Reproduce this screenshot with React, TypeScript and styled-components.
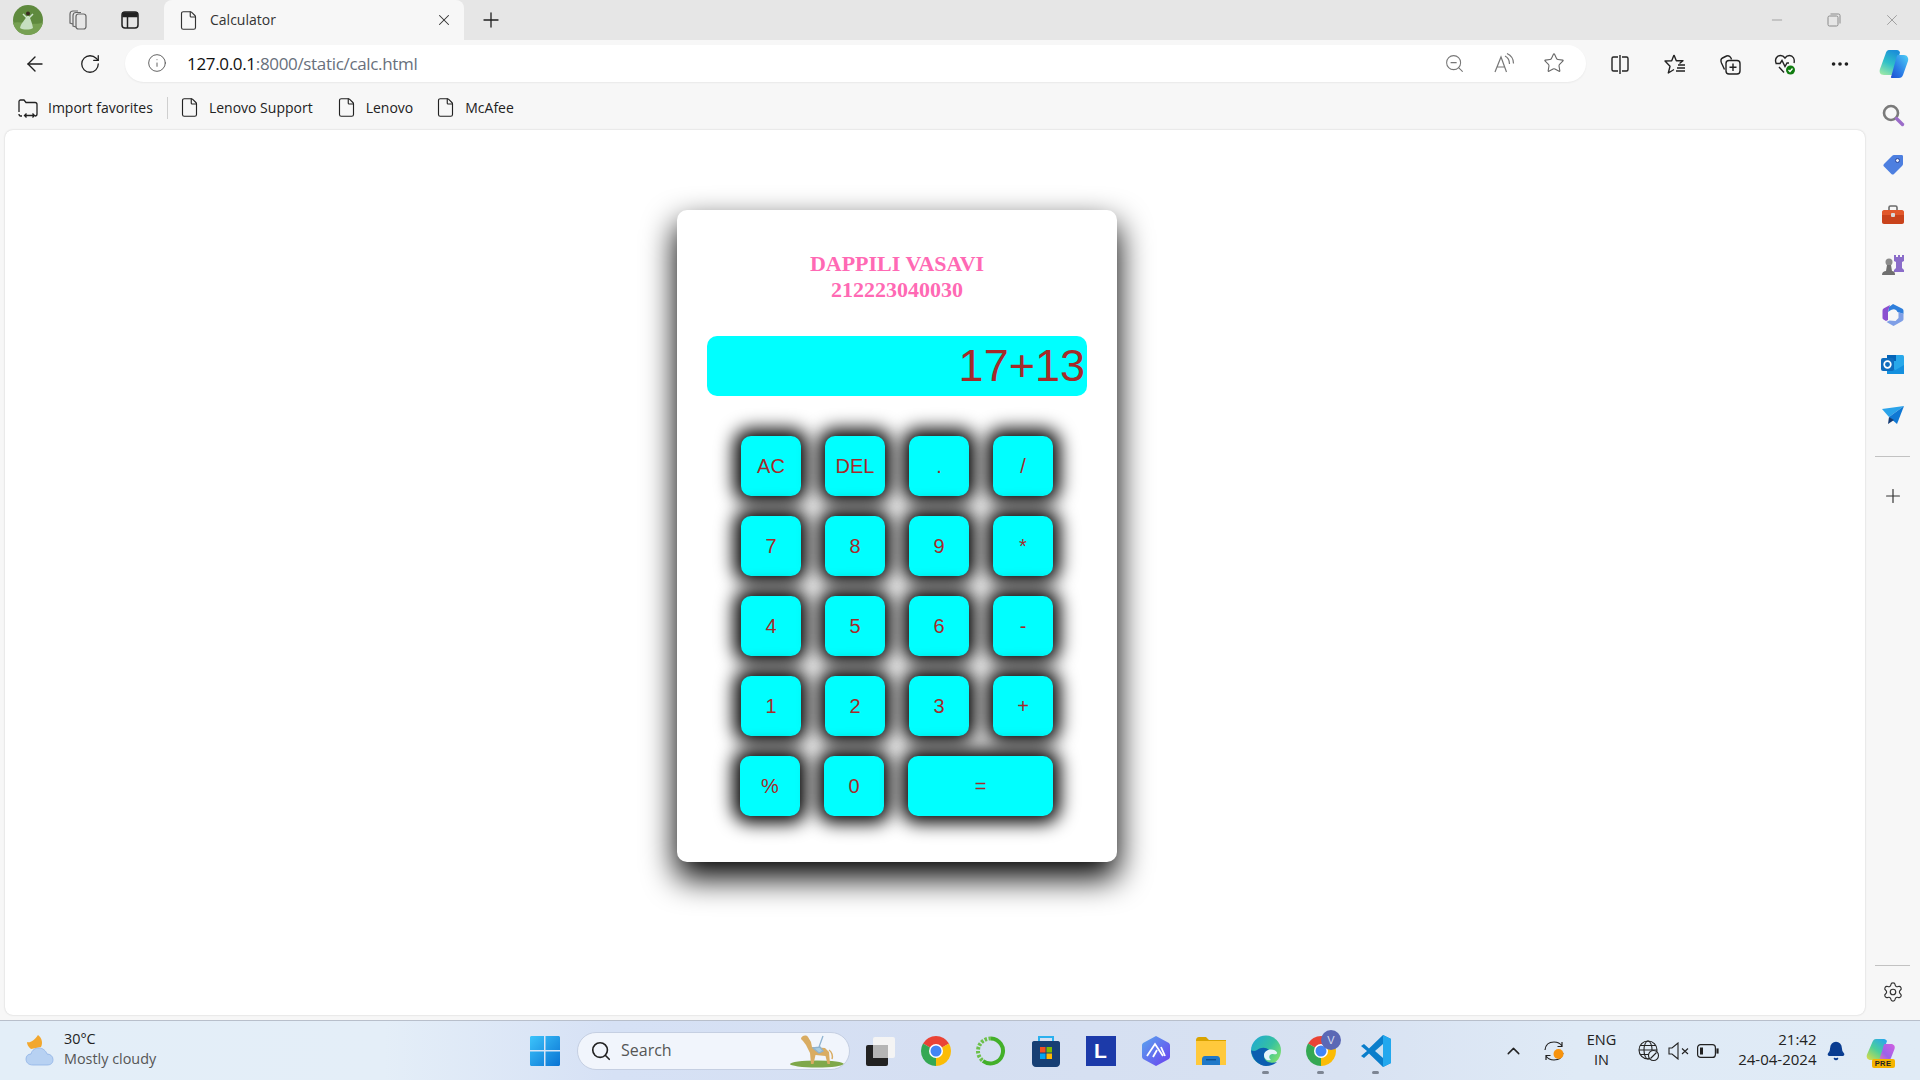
import React from "react";
import styled, { createGlobalStyle } from "styled-components";
import { ArrowLeft, RotateCw, Info, ZoomOut, Star, X, Plus, Minus, ChevronUp, Search, Settings, File, MoreHorizontal, Bell } from "lucide-react";

const Global = createGlobalStyle`
  html, body { margin: 0; padding: 0; }
  body { width: 1920px; height: 1080px; overflow: hidden; background: #f7f7f7; font-family: "Open Sans", "Liberation Sans", sans-serif; }
  * { box-sizing: border-box; }
`;

const Frame = styled.div`
  width: 1920px; height: 1080px; display: flex; flex-direction: column; background: #f7f7f7;
`;
const TabStrip = styled.div`
  height: 40px; flex: none; display: flex; align-items: stretch; background: #e6e6e6;
`;
const Slot = styled.div<{ $w: number }>`
  width: ${p => p.$w}px; flex: none; display: flex; align-items: center; justify-content: center; color: #1f1f1f;
`;
const Tab = styled.div`
  width: 300px; margin-left: 3px; flex: none; display: flex; align-items: center; background: #f7f7f7;
  border-radius: 8px 8px 0 0; padding-left: 14px; font-size: 14px; color: #333;
`;
const TabTitle = styled.span`
  margin: 0 0 2px 11px; flex: 1;
`;
const TabClose = styled.span`
  width: 40px; display: flex; justify-content: center; color: #333;
`;
const Spacer = styled.div`flex: 1;`;
const WinButton = styled(Slot)`
  color: #8a8a8a;
`;
const Toolbar = styled.div`
  height: 48px; flex: none; display: flex; align-items: center; padding-left: 7px; background: #f7f7f7;
`;
const UrlBox = styled.div`
  flex: 1; height: 37px; margin: 0 6px 2px 8px; background: #fff; border-radius: 19px; display: flex; align-items: center;
  padding: 0 7px 0 19px; box-shadow: 0 1px 2px rgba(0,0,0,.06);
`;
const UrlText = styled.div`
  margin-left: 18px; flex: 1; font-size: 17px; color: #68707c; letter-spacing: -0.33px;
`;
const Host = styled.span`color: #111;`;
const ToolSlot = styled(Slot)`
  height: 40px;
`;
const Body = styled.div`
  flex: 1; min-height: 0; display: flex;
`;
const MainCol = styled.div`
  flex: 1; min-width: 0; display: flex; flex-direction: column;
`;
const Favorites = styled.div`
  height: 42px; flex: none; display: flex; align-items: center; padding: 0 0 3px 17px; font-size: 14px; color: #222;
`;
const Fav = styled.div<{ $ml?: number }>`
  display: flex; align-items: center; gap: 9px; margin-left: ${p => p.$ml ?? 0}px;
`;
const FavSep = styled.div`
  width: 1px; height: 22px; background: #cfcfcf; margin-left: 14px;
`;
const Content = styled.main`
  flex: 1; margin: 0 0 5px 5px; background: #fff; border-radius: 8px; box-shadow: 0 0 2px rgba(0,0,0,.2);
  padding: 80px 0 0 672px;
`;
const Card = styled.section`
  width: 440px; height: 652px; background: #fff; border-radius: 10px; padding: 41px 30px 0;
  box-shadow: 0 15px 32px 1px #000;
`;
const Title = styled.h2`
  margin: 0; font: bold 22px/26px "Liberation Serif", serif; color: #ff69b4; text-align: center;
`;
const Display = styled.div`
  margin-top: 33px; height: 60px; background: #0ff; border-radius: 10px; color: #a52a2a; text-align: right;
  font: 45px/60px "Liberation Sans", sans-serif; padding-right: 2px;
`;
const Keypad = styled.div`
  margin: 40px 0 0 34px; display: flex; flex-direction: column; gap: 20px;
`;
const KeyRow = styled.div<{ $last?: boolean }>`
  display: flex; gap: 24px; margin-left: ${p => (p.$last ? -1 : 0)}px;
`;
const Key = styled.button<{ $wide?: boolean }>`
  width: ${p => (p.$wide ? 145 : 60)}px; height: 60px; border: 0; padding: 0; border-radius: 10px; background: #0ff; color: #a52a2a;
  font: 20px "Liberation Sans", sans-serif; box-shadow: 0 0 18px 7px #000;
`;
const Sidebar = styled.aside`
  width: 55px; flex: none; display: flex; flex-direction: column; align-items: center; padding: 2px 0 0;
`;
const SideItem = styled.div`
  height: 50px; width: 100%; flex: none; display: flex; align-items: center; justify-content: center; color: #333;
`;
const SideRule = styled.div`
  width: 35px; height: 1px; background: #c2c2c2; flex: none; margin: 16px 0 14px;
`;
const SideBottom = styled.div`
  margin-top: auto; width: 100%; display: flex; flex-direction: column; align-items: center; padding-bottom: 3px;
`;
const SideRuleBottom = styled(SideRule)`
  margin: 0 0 1px;
`;
const Taskbar = styled.footer`
  height: 60px; flex: none; display: flex; align-items: center; border-top: 1px solid #b8bfcb;
  background: linear-gradient(90deg, #e3eef8 0%, #e4eef8 20%, #d6e1f5 32%, #d5dff2 50%, #d8e2f2 70%, #dfeaf6 82%, #e0ebf6 100%);
`;
const Weather = styled.div`
  width: 530px; flex: none; display: flex; align-items: center; padding-left: 25px;
`;
const WeatherText = styled.div`
  margin-left: 7px; padding-bottom: 3px; font-size: 14.4px; line-height: 20px; color: #222;
`;
const WeatherSub = styled.div`
  color: #555;
`;
const SearchBox = styled.div`
  width: 273px; height: 38px; margin: 0 3px 0 17px; flex: none; border-radius: 19px; background: #f1f5fc; border: 1px solid #c5cfe2;
  display: flex; align-items: center; padding: 0 4px 0 12px; font-size: 16px; color: #555; gap: 9px; overflow: hidden;
`;
const SearchLabel = styled.span`flex: 1; padding-bottom: 2px;`;
const TaskIcon = styled.div<{ $on?: boolean }>`
  width: 55px; height: 48px; flex: none; display: flex; align-items: center; justify-content: center; position: relative;
  ${p => p.$on ? `&::after { content: ""; position: absolute; left: 24px; bottom: 1px; width: 7px; height: 3px; border-radius: 2px; background: #7d8593; }` : ""}
`;
const Tray = styled.div`
  flex: 1; display: flex; align-items: center; height: 100%; padding-left: 100px; font-size: 14px; color: #222;
`;
const TrayItem = styled.div<{ $w: number; $ml?: number }>`
  width: ${p => p.$w}px; margin-left: ${p => p.$ml ?? 0}px; flex: none; display: flex; align-items: center; justify-content: center;
`;
const Lang = styled.div`
  width: 37px; flex: none; padding-bottom: 2px; line-height: 20px; text-align: center; color: #222; font-size: 14.5px;
`;
const Clock = styled.div`
  width: 95.5px; flex: none; padding-bottom: 3px; line-height: 20px; text-align: right; color: #222; font-size: 15px;
`;

const Avatar = () => (
  <svg width="30" height="30" viewBox="0 0 30 30">
    <ellipse cx="15" cy="15" rx="15" ry="15" fill="#5f8a3e" />
    <path d="M0 18C6 15 22 22 30 17 28 26 22 30 15 30 7 30 2 25 0 18Z" fill="#76a052" />
    <path d="M14 11c-2 4-6 7-7 12 3 2 10 2 13 0-1-5-2-8-4-12Z" fill="#c6dfc0" />
    <path d="M10 9l4 4M20 9l-4 4" stroke="#cfe5cd" strokeWidth="1.500" />
    <circle cx="15" cy="8.500" r="2" fill="#3a2a20" />
  </svg>
);
const Collections = () => (
  <svg width="22" height="22" viewBox="0 0 22 22" fill="none" stroke="#666" strokeWidth="1.2">
    <rect x="9" y="5" width="10" height="15" rx="2.5" />
    <path d="M9 18 6 17V6.500C6 4.500 7.500 3.500 9 3.500L14 3.500M5.500 15 3 14V5C3 3 4.500 2 6 2h5" />
  </svg>
);
const VerticalTabs = () => (
  <svg width="20" height="20" viewBox="0 0 20 20" fill="none" stroke="#222" strokeWidth="1.5">
    <rect x="2" y="2" width="16" height="16" rx="3" />
    <path d="M3 3h14v3.500H3z" fill="#222" />
    <path d="M7.500 6v12" />
  </svg>
);
const Restore = () => (
  <svg width="14" height="14" viewBox="0 0 14 14" fill="none" stroke="#8a8a8a" strokeWidth="1">
    <rect x="1" y="3" width="10" height="10" rx="1.500" />
    <path d="M3.500 1h8A1.500 1.500 0 0 1 13 2.500v8" />
  </svg>
);
const ReadAloud = () => (
  <svg width="22" height="22" viewBox="0 0 22 22" fill="none" stroke="#777" strokeWidth="1.200">
    <path d="M2 20 8 5l5.500 15M4 15h8" />
    <path d="M12 4c3 1.500 4.500 4 4.500 8M14 1.500c4 1.800 6.500 5 6.500 10" />
  </svg>
);
const Split = () => (
  <svg width="20" height="20" viewBox="0 0 20 20" fill="none" stroke="#222" strokeWidth="1.400">
    <path d="M8 3H3.500A1.500 1.500 0 0 0 2 4.500v11A1.500 1.500 0 0 0 3.500 17H8M12 3h4.500A1.500 1.500 0 0 1 18 4.500v11a1.500 1.500 0 0 1-1.500 1.500H12M10 1v19" />
  </svg>
);
const FavStar = () => (
  <svg width="22" height="22" viewBox="0 0 22 22" fill="none" stroke="#222" strokeWidth="1.400">
    <path d="M10 2 12.300 7.800H19L15.500 10.500M10 16.500 4.300 20 6 13.300 1 8 7.700 7.800 10 2" strokeLinejoin="round" />
    <path d="M14 12h7M13 15h8M12 18h9" />
  </svg>
);
const CollectAdd = () => (
  <svg width="22" height="22" viewBox="0 0 22 22" fill="none" stroke="#222" strokeWidth="1.400">
    <rect x="7" y="7.500" width="14" height="13.500" rx="3" />
    <path d="M14 10.500v7.500M10.500 14.200h7M5.500 16.500 2.500 10c-1-2.500-1-4 1-5l4-2c2-.8 3.500 0 4.500 2l.5 1.500" />
  </svg>
);
const Health = () => (
  <svg width="24" height="24" viewBox="0 0 24 24" fill="none">
    <path d="M3 11C1.500 7 4 3.500 7.500 3.500c2 0 3.500 1 4.500 2.500 1-1.500 2.500-2.500 4.500-2.500C20 3.500 22 7 21 11M2.500 11.500H7l2-3 3 6 2-3.500h2M6 15l5 5.500" stroke="#222" strokeWidth="1.400" />
    <circle cx="17.500" cy="18" r="4.500" fill="#107c10" />
    <path d="m15.500 18 1.500 1.500 2.500-3" stroke="#fff" strokeWidth="1.300" />
  </svg>
);
const CopilotLogo = () => (
  <svg width="32" height="32" viewBox="0 0 32 32">
    <defs>
      <linearGradient id="cpa" x1="0.600" y1="0" x2="0.200" y2="1">
        <stop offset="0" stopColor="#1c8fd8" />
        <stop offset=".5" stopColor="#2fc0c8" />
        <stop offset="1" stopColor="#9be8a8" />
      </linearGradient>
      <linearGradient id="cpb" x1="1" y1="0" x2="0" y2="1">
        <stop offset="0" stopColor="#4fd0f6" />
        <stop offset=".6" stopColor="#2a7ce6" />
        <stop offset="1" stopColor="#1c4fd1" />
      </linearGradient>
    </defs>
    <path d="M11 2h8c1.600 0 2.500 1 3 2.500L16 25c-.6 1.600-1.800 2-3 2H6c-4 0-5-3-4-6l5.500-15C8.200 3.500 9.500 2 11 2Z" fill="url(#cpa)" />
    <path d="M20 7h6c3 0 5 3 4 6l-5 14c-.7 2-2 3-4 3h-7c-1.700 0-1-1-.5-2.500L18 11c.5-2 1-4 2-4Z" fill="url(#cpb)" />
  </svg>
);
const CopilotPre = () => (
  <svg width="30" height="26" viewBox="0 0 30 26">
    <defs>
      <linearGradient id="cpc" x1="0.800" y1="0" x2="0.100" y2="1">
        <stop offset="0" stopColor="#2aa9e8" />
        <stop offset=".5" stopColor="#4ccf9a" />
        <stop offset="1" stopColor="#d5dc4a" />
      </linearGradient>
      <linearGradient id="cpd" x1="1" y1="0" x2="0" y2="1">
        <stop offset="0" stopColor="#d45fe0" />
        <stop offset=".6" stopColor="#9a62ea" />
        <stop offset="1" stopColor="#ee7aa6" />
      </linearGradient>
    </defs>
    <path d="M10 1h8c1.500 0 2.300 1 3 2L15 20c-.5 1.400-1.500 2-3 2H5c-3.500 0-5-2.500-4-5.500L6 5C7 2.500 8 1 10 1Z" fill="url(#cpc)" />
    <path d="M19 6h6c3 0 4.500 2.500 3.500 5L25 20c-.7 2-2 3-4 3h-7c-1.500 0-1-1-.5-2L17 10c.5-2 1-4 2-4Z" fill="url(#cpd)" />
  </svg>
);
const SideSearch = () => (
  <svg width="24" height="24" viewBox="0 0 24 24" fill="none">
    <circle cx="10" cy="10" r="7" stroke="#7a7a7a" strokeWidth="2.600" />
    <path d="m15.500 15.500 6 6" stroke="#9b6cc9" strokeWidth="3.400" strokeLinecap="round" />
  </svg>
);
const TagIcon = () => (
  <svg width="22" height="22" viewBox="0 0 22 22">
    <path d="M12 1h7.500C20.500 1 21 1.500 21 2.500V10c0 .8-.3 1.300-1 2l-8 8c-.8.800-1.800.800-2.600 0L2 12.600c-.8-.8-.8-1.800 0-2.600l8-8c.7-.7 1.200-1 2-1Z" fill="#4d7fe0" />
    <circle cx="15.500" cy="6.500" r="2" fill="#e8eefb" stroke="#27459c" />
  </svg>
);
const ToolboxIcon = () => (
  <svg width="24" height="22" viewBox="0 0 24 22">
    <path d="M8 7V3.500C8 2.500 8.500 2 9.500 2h5c1 0 1.500.5 1.500 1.500V7" fill="none" stroke="#6b6b6b" strokeWidth="1.600" />
    <path d="M1 8c0-1 .8-2 2-2h18c1.200 0 2 1 2 2v3H1z" fill="#e2582b" />
    <path d="M1 11h22v7c0 1-.8 2-2 2H3c-1.200 0-2-1-2-2z" fill="#c9431c" />
    <rect x="10" y="9" width="4" height="4" rx="1" fill="#d8d8d8" />
  </svg>
);
const ChessIcon = () => (
  <svg width="24" height="24" viewBox="0 0 24 24">
    <path d="M14 2h2v2h2V2h2v2h2V2h2v6l-2 1v6l2 2v2H14v-2l2-2V9l-2-1z" fill="#8a6cc9" transform="translate(-1 0)" />
    <circle cx="8" cy="9" r="3.500" fill="#8b8b8b" />
    <path d="M6 12h4l1 6H5zM1 22c0-3 2-4 4-4h6c2 0 3 1 3 4z" fill="#6f6f6f" />
  </svg>
);
const M365Icon = () => (
  <svg width="22" height="24" viewBox="0 0 22 24">
    <path d="M11 1 20 5.500c1 .5 1.500 1.200 1.500 2.500v3l-6-2C14 6 12 5.500 9 7L6 9 7 4z" fill="#2f7fdc" />
    <path d="M.5 8C.5 6.500 1 5.800 2 5.300L8 2 6 8v9l-2 1-2.500-1.500C.8 16 .5 15.500.5 14.500z" fill="#8a4fd0" />
    <path d="M21.500 11v5c0 1-.5 1.800-1.500 2.300L11.500 23 4.500 19l3-1.500 6 .5 3-3V9z" fill="#7f9fe6" />
    <circle cx="11" cy="12" r="3.300" fill="#f7f7f7" />
  </svg>
);
const OutlookIcon = () => (
  <svg width="24" height="22" viewBox="0 0 24 22">
    <rect x="6" y="1" width="17" height="19" rx="1.500" fill="#28a8ea" />
    <rect x="6" y="1" width="9" height="6" fill="#0364b8" />
    <path d="M6 20h17v-9l-8.500 5-8.500-5z" fill="#1490df" />
    <rect x="0" y="4" width="13" height="13" rx="2" fill="#0f6cbd" />
    <circle cx="6.500" cy="10.500" r="3.300" fill="none" stroke="#fff" strokeWidth="1.700" />
  </svg>
);
const SendIcon = () => (
  <svg width="24" height="20" viewBox="0 0 24 20">
    <path d="M1 4 23 1 8 12z" fill="#2aa3ea" />
    <path d="M23 1 16 19 8 12z" fill="#0f78d4" />
    <path d="M8 12l-1 7 6-4z" fill="#143a73" />
  </svg>
);
const WeatherIcon = () => (
  <svg width="32" height="34" viewBox="0 0 32 34">
    <path d="M13 1c4 3 5 8 3 12l-10 2C3 13 2 10 2 8c3 1 7-1 11-7Z" fill="#f2a72e" />
    <path d="M8 31C3 31 1 28 1 25s2-5 5-5c1-4 4-6 8-6s7 3 8 6c3 0 6 2 6 5.500S26 31 22 31z" fill="#b7d1f2" stroke="#8fb2e6" strokeWidth=".8" />
  </svg>
);
const WinLogo = () => (
  <svg width="30" height="30" viewBox="0 0 30 30">
    <defs>
      <linearGradient id="wl" x1="0" y1="0" x2="1" y2="1"><stop offset="0" stopColor="#3cc4fb" /><stop offset="1" stopColor="#0a73d3" /></linearGradient>
    </defs>
    <path d="M0 1.500C0 .7.700 0 1.500 0H14v14H0zM15.500 0H28.500c.8 0 1.500.7 1.500 1.500V14H15.500zM0 15.500H14V30H1.500C.7 30 0 29.300 0 28.500zM15.500 15.500H30v13c0 .8-.7 1.500-1.500 1.500H15.500z" fill="url(#wl)" />
  </svg>
);
const Dog = () => (
  <svg width="56" height="34" viewBox="0 0 56 34">
    <ellipse cx="28" cy="30" rx="27" ry="3.500" fill="#7fa84a" />
    <path d="M12 5c0-3 5-5 7-2l3 5 1 5 13 1 4 4 1 12h-2.500l-2-8-10-1-2 9h-2.500l-1-11-4-8-3-4z" fill="#d9ac62" />
    <path d="M24 14l6 5 4-2-3-4zM30 13l4-11" stroke="#8fb3d0" strokeWidth="1.300" fill="#a8cce0" />
    <path d="M40 16c3 2 4 6 3 9" stroke="#d9ac62" strokeWidth="1.500" fill="none" />
  </svg>
);
const TaskView = () => (
  <svg width="30" height="30" viewBox="0 0 30 30">
    <rect x="0" y="9" width="22" height="21" rx="2" fill="#222" />
    <rect x="7" y="1" width="22" height="21" rx="2" fill="#f4f4f4" />
    <rect x="7" y="9" width="15" height="13" fill="#b5b5b5" />
  </svg>
);
const ChromeIcon = () => (
  <svg width="30" height="30" viewBox="0 0 30 30">
    <path d="M15 15 27.990 7.500A15 15 0 0 0 2.010 7.500Z" fill="#ea4335" />
    <path d="M15 15 2.010 7.500A15 15 0 0 0 15 30Z" fill="#34a853" />
    <path d="M15 15 15 30A15 15 0 0 0 27.990 7.500Z" fill="#fbbc05" />
    <circle cx="15" cy="15" r="7" fill="#fff" />
    <circle cx="15" cy="15" r="5.500" fill="#4285f4" />
  </svg>
);
const RingIcon = () => (
  <svg width="30" height="30" viewBox="0 0 30 30" fill="none">
    <path d="M15 2.500A12.500 12.500 0 1 1 7 25" stroke="#43b02a" strokeWidth="4" />
    <path d="M15 2.500A12.500 12.500 0 0 0 7 25" stroke="#6cc04a" strokeWidth="4" strokeDasharray="2.500 1.500" />
  </svg>
);
const StoreIcon = () => (
  <svg width="30" height="32" viewBox="0 0 30 32">
    <path d="M8 7V2h14v5" fill="none" stroke="#2bb0ee" strokeWidth="2" />
    <path d="M1 8c0-1 .7-2 2-2h24c1.300 0 2 1 2 2v20c0 2-1.500 4-4 4H5c-2.500 0-4-2-4-4z" fill="#173f74" />
    <rect x="9" y="12" width="5.500" height="5.500" fill="#f25022" />
    <rect x="15.500" y="12" width="5.500" height="5.500" fill="#7fba00" />
    <rect x="9" y="18.500" width="5.500" height="5.500" fill="#00a4ef" />
    <rect x="15.500" y="18.500" width="5.500" height="5.500" fill="#ffb900" />
  </svg>
);
const LBadge = styled.div`
  width: 30px; height: 30px; background: #1c3aa9; color: #fff; font: bold 21px/30px "Liberation Sans", sans-serif; text-align: center;
`;
const MountainIcon = () => (
  <svg width="28" height="30" viewBox="0 0 28 30">
    <defs>
      <linearGradient id="mi" x1="0" y1="0" x2="1" y2="1"><stop offset="0" stopColor="#58a6ee" /><stop offset="1" stopColor="#6b3ff0" /></linearGradient>
    </defs>
    <path d="M14 0 26 6.500c1.300.7 2 1.700 2 3v11c0 1.300-.7 2.300-2 3L14 30 2 23.500c-1.300-.7-2-1.700-2-3v-11c0-1.300.7-2.300 2-3Z" fill="url(#mi)" />
    <path d="M5 20 13 8l8 12M11 21l4-7M19 11l4 9" stroke="#fff" strokeWidth="1.800" fill="none" />
  </svg>
);
const FolderIcon = () => (
  <svg width="30" height="28" viewBox="0 0 30 28">
    <path d="M0 3c0-1.500 1-3 3-3h7l3 3h17v5H0z" fill="#d9a300" />
    <path d="M0 4h30v24H0z" fill="#ffc93c" />
    <path d="M6 27v-5c0-1.500 1-3 3-3h12c2 0 3 1.500 3 3v6H6z" fill="#1f78c8" />
    <rect x="10" y="22" width="10" height="1.400" fill="#0b4e8e" />
  </svg>
);
const EdgeIcon = () => (
  <svg width="30" height="32" viewBox="0 0 30 32">
    <defs>
      <linearGradient id="eg" x1="0" y1="0" x2="1" y2=".7"><stop offset="0" stopColor="#1fa6d8" /><stop offset=".6" stopColor="#35c1a1" /><stop offset="1" stopColor="#7fe06d" /></linearGradient>
    </defs>
    <circle cx="15" cy="15.500" r="15" fill="url(#eg)" />
    <path d="M0 15.500C1 24 8 31 15 31c4 0 8-1 11-4-6 2-13 0-13-6 0-3 2-5 5-6 -3-3-8-3-12 0-3 2-5 0-6 .5Z" fill="#0c5eb0" />
    <path d="M13 20c0-3 3-5.500 7-5.500 3 0 5 1 6 3 .5 2-2 2-4 1.500-4 0-5 4-2 6-4 1-7-1-7-5Z" fill="#e6f3fb" />
  </svg>
);
const VsCodeIcon = () => (
  <svg width="30" height="32" viewBox="0 0 30 32">
    <path d="M22 0 30 4v24l-8 4L8 18.500l-5 4.500-3-2 6-5-6-5 3-2 5 4.500z" fill="#0a7ecb" />
    <path d="M22 0 30 4v24l-8 4z" fill="#22a8ee" />
    <path d="M22 9v14l-8-7z" fill="#e0ebf6" opacity=".9" />
  </svg>
);
const ProfileBadge = styled.span`
  position: absolute; left: 28px; top: 3px; width: 20px; height: 20px; border-radius: 50%; background: #5b68b5; color: #d6dbf0;
  font: 11px/20px "Liberation Sans", sans-serif; text-align: center;
`;
const SyncIcon = () => (
  <svg width="24" height="24" viewBox="0 0 24 24" fill="none">
    <path d="M3 11C3.500 6 7 3 12 3c3 0 6 1 8 4M20 3v4.500h-4.500M21 14c-1 5-4 7-9 7-3 0-6-1-8-4M4 21v-4.500h4.500" stroke="#222" strokeWidth="1.200" />
    <circle cx="16.500" cy="15" r="5" fill="#f7930e" />
  </svg>
);
const GlobeOff = () => (
  <svg width="22" height="22" viewBox="0 0 22 22" fill="none" stroke="#222" strokeWidth="1.100">
    <circle cx="10" cy="10" r="9" />
    <ellipse cx="10" cy="10" rx="4" ry="9" />
    <path d="M1 10h18M2 5.500h16M2 14.500h10" />
    <circle cx="15.500" cy="15.500" r="5" fill="#e3eef8" />
    <path d="m12.500 18.500 6-6" />
  </svg>
);
const Mute = () => (
  <svg width="22" height="18" viewBox="0 0 22 18" fill="none" stroke="#222" strokeWidth="1.100">
    <path d="M1 6h3l6-5v16l-6-5H1z" />
    <path d="m14 6.500 6 5.500M20 6.500 14 12" />
  </svg>
);
const Battery = () => (
  <svg width="22" height="14" viewBox="0 0 22 14" fill="none" stroke="#222" strokeWidth="1.200">
    <rect x=".6" y=".6" width="17.800" height="12.800" rx="3" />
    <rect x="3" y="3.500" width="3" height="7" fill="#222" stroke="none" />
    <path d="M20 5h1v4h-1z" fill="#222" />
  </svg>
);
const PreBadge = styled.span`
  position: absolute; left: 6px; bottom: -4px; width: 23px; height: 9px; background: #f5b400; color: #222; border-radius: 2px;
  font: bold 7.500px/9px "Liberation Sans", sans-serif; text-align: center; letter-spacing: .4px;
`;
const CopilotWrap = styled.div`
  position: relative; width: 30px; height: 26px;
`;
const ImportIcon = () => (
  <svg width="22" height="22" viewBox="0 0 22 22" fill="none" stroke="#222" strokeWidth="1.300">
    <path d="M2 15V4.500C2 3.500 2.800 3 3.500 3H7l2 2.500h9c1 0 2 .7 2 2V17c0 1-.7 2-2 2M5 19H3.500C2.500 19 2 18 2 17" />
    <path d="M8 18.500h9M9.500 16.500l-2 2 2 2M15.500 16.500l2 2-2 2" />
  </svg>
);

const doc = <File size={21} strokeWidth={1.3} color="#222" />;
const rows = [["AC", "DEL", ".", "/"], ["7", "8", "9", "*"], ["4", "5", "6", "-"], ["1", "2", "3", "+"]];

export default function App() {
  return (
    <Frame>
      <Global />
      <TabStrip>
        <Slot $w={56}><Avatar /></Slot>
        <Slot $w={43}><Collections /></Slot>
        <Slot $w={62}><VerticalTabs /></Slot>
        <Tab>
          <File size={21} strokeWidth={1.3} color="#333" />
          <TabTitle>Calculator</TabTitle>
          <TabClose><X size={18} strokeWidth={1.4} /></TabClose>
        </Tab>
        <Slot $w={53}><Plus size={24} strokeWidth={1.3} /></Slot>
        <Spacer />
        <WinButton $w={57}><Minus size={16} strokeWidth={1.100} /></WinButton>
        <WinButton $w={58}><Restore /></WinButton>
        <WinButton $w={57}><X size={18} strokeWidth={1} /></WinButton>
      </TabStrip>
      <Toolbar>
        <ToolSlot $w={56}><ArrowLeft size={24} strokeWidth={1.400} /></ToolSlot>
        <ToolSlot $w={54}><RotateCw size={22} strokeWidth={1.400} /></ToolSlot>
        <UrlBox>
          <Slot $w={25}><Info size={20} strokeWidth={1.100} color="#555" /></Slot>
          <UrlText><Host>127.0.0.1</Host>:8000/static/calc.html</UrlText>
          <Slot $w={50}><ZoomOut size={21} strokeWidth={1.200} color="#777" /></Slot>
          <Slot $w={50}><ReadAloud /></Slot>
          <Slot $w={50}><Star size={22} strokeWidth={1.200} color="#666" /></Slot>
        </UrlBox>
        <ToolSlot $w={55}><Split /></ToolSlot>
        <ToolSlot $w={55}><FavStar /></ToolSlot>
        <ToolSlot $w={55}><CollectAdd /></ToolSlot>
        <ToolSlot $w={55}><Health /></ToolSlot>
        <ToolSlot $w={55}><MoreHorizontal size={22} strokeWidth={2} /></ToolSlot>
        <ToolSlot $w={53}><CopilotLogo /></ToolSlot>
      </Toolbar>
      <Body>
        <MainCol>
          <Favorites>
            <Fav><ImportIcon />Import favorites</Fav>
            <FavSep />
            <Fav $ml={11}>{doc}Lenovo Support</Fav>
            <Fav $ml={23}>{doc}Lenovo</Fav>
            <Fav $ml={22}>{doc}McAfee</Fav>
          </Favorites>
          <Content>
            <Card>
              <Title>DAPPILI VASAVI<br />212223040030</Title>
              <Display>17+13</Display>
              <Keypad>
                {rows.map(r => (
                  <KeyRow key={r[0]}>{r.map(k => <Key key={k}>{k}</Key>)}</KeyRow>
                ))}
                <KeyRow $last>
                  <Key>%</Key>
                  <Key>0</Key>
                  <Key $wide>=</Key>
                </KeyRow>
              </Keypad>
            </Card>
          </Content>
        </MainCol>
        <Sidebar>
          <SideItem><SideSearch /></SideItem>
          <SideItem><TagIcon /></SideItem>
          <SideItem><ToolboxIcon /></SideItem>
          <SideItem><ChessIcon /></SideItem>
          <SideItem><M365Icon /></SideItem>
          <SideItem><OutlookIcon /></SideItem>
          <SideItem><SendIcon /></SideItem>
          <SideRule />
          <SideItem><Plus size={22} strokeWidth={1.300} /></SideItem>
          <SideBottom>
            <SideRuleBottom />
            <SideItem><Settings size={22} strokeWidth={1.300} /></SideItem>
          </SideBottom>
        </Sidebar>
      </Body>
      <Taskbar>
        <Weather>
          <WeatherIcon />
          <WeatherText>30°C<WeatherSub>Mostly cloudy</WeatherSub></WeatherText>
        </Weather>
        <WinLogo />
        <SearchBox>
          <Search size={22} strokeWidth={1.800} color="#222" />
          <SearchLabel>Search</SearchLabel>
          <Dog />
        </SearchBox>
        <TaskIcon><TaskView /></TaskIcon>
        <TaskIcon><ChromeIcon /></TaskIcon>
        <TaskIcon><RingIcon /></TaskIcon>
        <TaskIcon><StoreIcon /></TaskIcon>
        <TaskIcon><LBadge>L</LBadge></TaskIcon>
        <TaskIcon><MountainIcon /></TaskIcon>
        <TaskIcon><FolderIcon /></TaskIcon>
        <TaskIcon $on><EdgeIcon /></TaskIcon>
        <TaskIcon $on><ChromeIcon /><ProfileBadge>V</ProfileBadge></TaskIcon>
        <TaskIcon $on><VsCodeIcon /></TaskIcon>
        <Tray>
          <TrayItem $w={21}><ChevronUp size={22} strokeWidth={1.700} /></TrayItem>
          <TrayItem $w={59}><SyncIcon /></TrayItem>
          <Lang>ENG<br />IN</Lang>
          <TrayItem $w={29} $ml={14}><GlobeOff /></TrayItem>
          <TrayItem $w={31}><Mute /></TrayItem>
          <TrayItem $w={27}><Battery /></TrayItem>
          <Clock>21:42<br />24-04-2024</Clock>
          <TrayItem $w={38}><Bell size={20} fill="#0a3d91" color="#0a3d91" /></TrayItem>
          <TrayItem $w={52}>
            <CopilotWrap><CopilotPre /><PreBadge>PRE</PreBadge></CopilotWrap>
          </TrayItem>
        </Tray>
      </Taskbar>
    </Frame>
  );
}
